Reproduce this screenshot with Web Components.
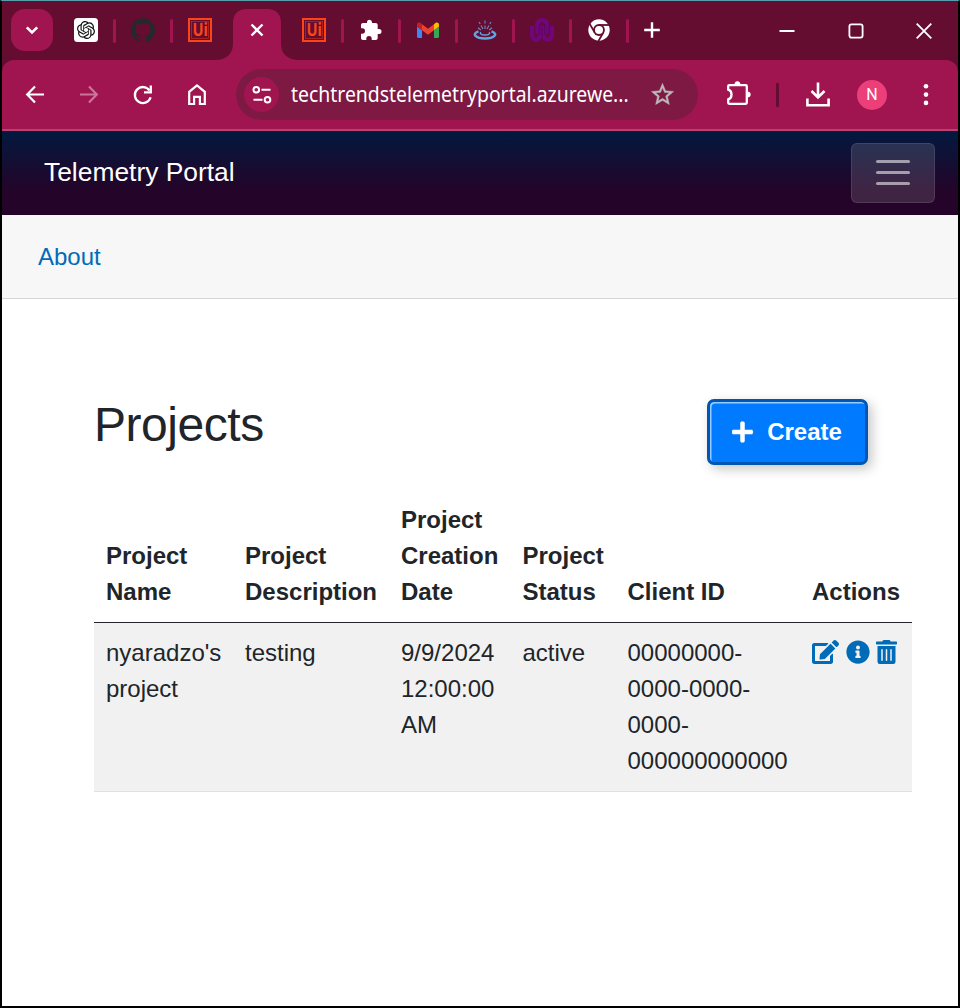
<!DOCTYPE html>
<html lang="en">
<head>
<meta charset="utf-8">
<title>Projects - Telemetry Portal</title>
<style>
html,body{margin:0;height:100%;background:#000;overflow:hidden}
body{font-family:"Liberation Sans",Arial,sans-serif}
</style>
</head>
<body>
<app-window>
  <tab-strip slot="chrome"></tab-strip>
  <nav-toolbar slot="chrome"></nav-toolbar>
  <portal-header slot="page">Telemetry Portal</portal-header>
  <portal-menu slot="page">About</portal-menu>
  <projects-view slot="page"></projects-view>
</app-window>
<script>
const define=(name,html)=>customElements.define(name,class extends HTMLElement{
  constructor(){super();this.attachShadow({mode:'open'}).innerHTML=html;}
});

// stroke attributes for line icons
const S=w=>`fill="none" stroke="currentColor" stroke-width="${w}"`;
const ICONS={
  chevron:['0 0 30 30',`<path ${S(2.6)} d="M9.8 12.3L15 17.5L20.2 12.3"/>`],
  openai:['0 0 24 24',`<rect width="24" height="24" rx="3.5" fill="#fff"/><g transform="translate(3 3) scale(.75)"><path fill="#111" d="M22.2819 9.8211a5.9847 5.9847 0 0 0-.5157-4.9108 6.0462 6.0462 0 0 0-6.5098-2.9A6.0651 6.0651 0 0 0 4.9807 4.1818a5.9847 5.9847 0 0 0-3.9977 2.9 6.0462 6.0462 0 0 0 .7427 7.0966 5.98 5.98 0 0 0 .511 4.9107 6.051 6.051 0 0 0 6.5146 2.9001A5.9847 5.9847 0 0 0 13.2599 24a6.0557 6.0557 0 0 0 5.7718-4.2058 5.9894 5.9894 0 0 0 3.9977-2.9001 6.0557 6.0557 0 0 0-.7475-7.0729zm-9.022 12.6081a4.4755 4.4755 0 0 1-2.8764-1.0408l.1419-.0804 4.7783-2.7582a.7948.7948 0 0 0 .3927-.6813v-6.7369l2.02 1.1686a.071.071 0 0 1 .038.052v5.5826a4.504 4.504 0 0 1-4.4945 4.4944zm-9.6607-4.1254a4.4708 4.4708 0 0 1-.5346-3.0137l.142.0852 4.783 2.7582a.7712.7712 0 0 0 .7806 0l5.8428-3.3685v2.3324a.0804.0804 0 0 1-.0332.0615L9.74 19.9502a4.4992 4.4992 0 0 1-6.1408-1.6464zM2.3408 7.8956a4.485 4.485 0 0 1 2.3655-1.9728V11.6a.7664.7664 0 0 0 .3879.6765l5.8144 3.3543-2.0201 1.1685a.0757.0757 0 0 1-.071 0l-4.8303-2.7865A4.504 4.504 0 0 1 2.3408 7.872zm16.5963 3.8558L13.1038 8.364 15.1192 7.2a.0757.0757 0 0 1 .071 0l4.8303 2.7913a4.4944 4.4944 0 0 1-.6765 8.1042v-5.6772a.79.79 0 0 0-.407-.667zm2.0107-3.0231l-.142-.0852-4.7735-2.7818a.7759.7759 0 0 0-.7854 0L9.409 9.2297V6.8974a.0662.0662 0 0 1 .0284-.0615l4.8303-2.7866a4.4992 4.4992 0 0 1 6.6802 4.66zM8.3065 12.863l-2.02-1.1638a.0804.0804 0 0 1-.038-.0567V6.0742a4.4992 4.4992 0 0 1 7.3757-3.4537l-.142.0805L8.704 5.459a.7948.7948 0 0 0-.3927.6813zm1.0976-2.3654l2.602-1.4998 2.6069 1.4998v2.9994l-2.5974 1.4997-2.6067-1.4997Z"/></g>`],
  github:['0 0 24 24',`<path fill="#24292e" d="M12 .297c-6.63 0-12 5.373-12 12 0 5.303 3.438 9.8 8.205 11.385.6.113.82-.258.82-.577 0-.285-.01-1.04-.015-2.04-3.338.724-4.042-1.61-4.042-1.61C4.422 18.07 3.633 17.7 3.633 17.7c-1.087-.744.084-.729.084-.729 1.205.084 1.838 1.236 1.838 1.236 1.07 1.835 2.809 1.305 3.495.998.108-.776.417-1.305.76-1.605-2.665-.3-5.466-1.332-5.466-5.93 0-1.31.465-2.38 1.235-3.22-.135-.303-.54-1.523.105-3.176 0 0 1.005-.322 3.3 1.23.96-.267 1.98-.399 3-.405 1.02.006 2.04.138 3 .405 2.28-1.552 3.285-1.23 3.285-1.23.645 1.653.24 2.873.12 3.176.765.84 1.23 1.91 1.23 3.22 0 4.61-2.805 5.625-5.475 5.92.42.36.81 1.096.81 2.22 0 1.606-.015 2.896-.015 3.286 0 .315.21.69.825.57C20.565 22.092 24 17.592 24 12.297c0-6.627-5.373-12-12-12"/>`],
  uipath:['0 0 24 24',`<rect x="1" y="1" width="22" height="22" fill="none" stroke="#fa4616" stroke-width="2"/><rect x="3.4" y="3.4" width="17.2" height="17.2" fill="none" stroke="#fa4616" stroke-width=".6" opacity=".7"/><text x="12.2" y="18.2" text-anchor="middle" textLength="15.5" lengthAdjust="spacingAndGlyphs" font-family="Noto Sans,sans-serif" font-weight="700" font-size="17.5" fill="#fa4616">Ui</text>`],
  close:['0 0 30 30',`<path ${S(2.4)} d="M9.5 9.5L20.5 20.5M20.5 9.5L9.5 20.5"/>`],
  extension:['0 0 24 24',`<path fill="#fff" d="M20 11H18.700V7c0-1.100-.9-2-2-2h-3.700V4.200a2.500 2.500 0 0 0-5 0V5H4c-1.100 0-1.990.9-1.990 2v3.300H3.300a2.700 2.700 0 0 1 0 5.400H2V20c0 1.100.9 2 2 2h3.300v-1.200a2.700 2.700 0 0 1 5.400 0V22H16.700c1.100 0 2-.9 2-2v-4h1.300a2.500 2.500 0 0 0 0-5z"/>`],
  gmail:['0 0 24 24',`<path fill="#4285f4" d="M1 8.500L6 12.200V20H2.500A1.500 1.500 0 0 1 1 18.500z"/><path fill="#34a853" d="M18 12.200L23 8.500V18.500A1.500 1.500 0 0 1 21.500 20H18z"/><path fill="#fbbc04" d="M18 6.200L19.400 5C21 3.900 23 4.900 23 6.800V8.500L18 12.300z"/><path fill="#c5221f" d="M6 6.200L4.600 5C3 3.900 1 4.900 1 6.800V8.500L6 12.300z"/><path fill="#ea4335" d="M6 6.200L12 10.700L18 6.200V12.300L12 16.800L6 12.300z"/>`],
  bowl:['0 0 24 24',`<g fill="none" stroke="#63a4df"><path stroke-width="1.100" opacity=".85" d="M12 11V7.500M12 5.500V2.500M10 11L8 7.500M7.200 6L6 4M14 11L16 7.500M16.800 6L18 4M7.800 12L5 9.700M16.200 12L19 9.700"/><path stroke-width="1.300" d="M7.600 14C6.500 16.200 9 17 12 17S17.500 16.200 16.400 14"/><path stroke-width="2.400" d="M5.500 13.300C-2 16 3 20.500 12 20.500S26 16 18.500 13.300"/></g>`],
  links:['0 0 24 24',`<g fill="none" stroke="#70067a" stroke-width="4.400"><path d="M2.200 8V16.500Q2.200 21.500 6 21.500T10 17V8"/><path d="M7.200 16V7Q7.200 2.300 12 2.300T16.800 7V16"/><path d="M14 8V17Q14 21.500 18 21.500T21.800 16.500V8"/></g><path fill="none" stroke="#520a52" stroke-width=".7" d="M9.400 7V17M14.600 6V17M12 9V18M4.800 8V16M19.200 8V16"/>`],
  chromium:['0 0 24 24',`<circle cx="12" cy="12" r="10.700" fill="#fff"/><circle cx="12" cy="12" r="5.900" fill="#650d31"/><g stroke="#650d31" stroke-width="1.800" fill="none"><path d="M12 7H22.500"/><path d="M12 7H22.500" transform="rotate(120 12 12)"/><path d="M12 7H22.500" transform="rotate(240 12 12)"/></g><circle cx="12" cy="12" r="4" fill="#fff"/>`],
  add:['0 0 30 30',`<path ${S(2.4)} d="M15 7.200V22.800M7.200 15H22.800"/>`],
  minimize:['0 0 30 30',`<path ${S(2)} d="M7.500 16H22.500"/>`],
  maximize:['0 0 30 30',`<rect x="8.400" y="9.400" width="13.200" height="13.200" rx="2" ${S(1.8)}/>`],
  quit:['0 0 30 30',`<path ${S(1.8)} d="M7.700 8.700L22.300 23.300M22.300 8.700L7.700 23.300"/>`],
  back:['0 0 30 30',`<path ${S(2.2)} d="M24 14.500H7.500M15 6.500L7.200 14.500L15 22.500"/>`],
  forward:['0 0 30 30',`<path ${S(2.2)} d="M6 14.500H22.500M15 6.500L22.800 14.500L15 22.500"/>`],
  reload:['0 0 30 30',`<path ${S(2.3)} d="M21.500 10.500A8 8 0 1 0 22.600 17.200"/><path ${S(2.3)} d="M22.800 5.500V12.300H16"/>`],
  home:['0 0 30 30',`<path ${S(2.2)} d="M7.200 24V11.800L15 5.500L22.800 11.800V24H17.900V16.800H12.100V24Z"/>`],
  tune:['0 0 30 30',`<g ${S(2)}><circle cx="9.300" cy="9.700" r="2.800"/><path d="M14.500 9.700H23.500M6.500 19.700H15.500"/><circle cx="20.500" cy="19.700" r="2.800"/></g>`],
  star:['0 0 24 24',`<path fill="currentColor" stroke="currentColor" stroke-width=".3" d="M22 9.240l-7.190-.62L12 2 9.190 8.630 2 9.240l5.460 4.730L5.820 21 12 17.270 18.180 21l-1.630-7.030L22 9.240zM12 15.400l-3.760 2.270 1-4.280-3.320-2.880 4.380-.38L12 6.100l1.710 4.040 4.380.38-3.320 2.880 1 4.280L12 15.400z"/>`],
  puzzle:['0 0 30 30',`<path ${S(2.3)} d="M6.200 5.200H22.800Q23.800 5.200 23.800 6.200V22.800Q23.800 23.800 22.800 23.800H6.200Q5.200 23.800 5.200 22.800V19.300C9.600 18.200 9.600 10.800 5.200 9.700V6.200Q5.200 5.200 6.200 5.200Z"/><path fill="currentColor" d="M11.400 5A3 3.700 0 0 1 17.400 5ZM24 11.500A3.700 3 0 0 1 24 17.500Z"/>`],
  download:['0 0 30 30',`<path ${S(2.6)} d="M15 2.500V17M8.500 11L15 17.500L21.500 11M4.400 18.500V25.300H25.600V18.500"/>`],
  more:['0 0 30 30',`<g fill="currentColor"><circle cx="15" cy="6.300" r="2.300"/><circle cx="15" cy="14.600" r="2.300"/><circle cx="15" cy="22.900" r="2.300"/></g>`],
  plus:['0 0 448 512',`<path fill="currentColor" d="M416 208H272V64c0-17.670-14.330-32-32-32h-32c-17.670 0-32 14.330-32 32v144H32c-17.670 0-32 14.330-32 32v32c0 17.670 14.330 32 32 32h144v144c0 17.670 14.330 32 32 32h32c17.670 0 32-14.330 32-32V304h144c17.670 0 32-14.330 32-32v-32c0-17.670-14.330-32-32-32z"/>`],
  edit:['0 0 576 512',`<path fill="currentColor" d="M402.6 83.2l90.2 90.2c3.8 3.8 3.8 10 0 13.8L274.4 405.6l-92.8 10.3c-12.4 1.4-22.9-9.1-21.5-21.5l10.3-92.8L388.8 83.2c3.8-3.8 10-3.8 13.8 0zm162-22.900l-48.800-48.800c-15.200-15.200-39.900-15.200-55.200 0l-35.400 35.400c-3.800 3.800-3.800 10 0 13.800l90.200 90.200c3.800 3.800 10 3.800 13.800 0l35.400-35.400c15.200-15.300 15.200-40 0-55.200zM384 346.200V448H64V128h229.800c3.200 0 6.200-1.300 8.500-3.500l40-40c7.600-7.600 2.200-20.500-8.500-20.500H48C21.500 64 0 85.500 0 112v352c0 26.500 21.500 48 48 48h352c26.500 0 48-21.500 48-48V306.200c0-10.700-12.900-16-20.500-8.500l-40 40c-2.200 2.300-3.500 5.300-3.500 8.500z"/>`],
  info:['0 0 512 512',`<path fill="currentColor" d="M256 8C119.043 8 8 119.083 8 256c0 136.997 111.043 248 248 248s248-111.003 248-248C504 119.083 392.957 8 256 8zm0 110c23.196 0 42 18.804 42 42s-18.804 42-42 42-42-18.804-42-42 18.804-42 42-42zm56 254c0 6.627-5.373 12-12 12h-88c-6.627 0-12-5.373-12-12v-24c0-6.627 5.373-12 12-12h12v-64h-12c-6.627 0-12-5.373-12-12v-24c0-6.627 5.373-12 12-12h64c6.627 0 12 5.373 12 12v100h12c6.627 0 12 5.373 12 12v24z"/>`],
  trash:['0 0 448 512',`<path fill="currentColor" d="M32 464a48 48 0 0 0 48 48h288a48 48 0 0 0 48-48V128H32zm272-256a16 16 0 0 1 32 0v224a16 16 0 0 1-32 0zm-96 0a16 16 0 0 1 32 0v224a16 16 0 0 1-32 0zm-96 0a16 16 0 0 1 32 0v224a16 16 0 0 1-32 0zM432 32H312l-9.400-18.700A24 24 0 0 0 281.100 0H166.800a23.720 23.720 0 0 0-21.400 13.300L136 32H16A16 16 0 0 0 0 48v32a16 16 0 0 0 16 16h416a16 16 0 0 0 16-16V48a16 16 0 0 0-16-16z"/>`]
};
customElements.define('ui-icon',class extends HTMLElement{
  connectedCallback(){
    if(this.shadowRoot)return;
    const [box,body]=ICONS[this.getAttribute('name')];
    this.attachShadow({mode:'open'}).innerHTML=`<style>:host{display:inline-block;flex:none;width:var(--w,30px);height:var(--h,30px)}svg{display:block;width:100%;height:100%}</style><svg viewBox="${box}" aria-hidden="true">${body}</svg>`;
  }
});

define('app-window',`<style>
:host{display:flex;flex-direction:column;box-sizing:border-box;width:960px;height:1008px;border:2px solid #000;border-top:1px solid #579eae;background:#fff}
.chrome{background:#650d31}
.page{flex:1;background:#fff}
</style><div class="chrome"><slot name="chrome"></slot></div><div class="page"><slot name="page"></slot></div>`);

define('browser-tab',`<style>
:host{display:flex;position:relative;width:57px;height:58px;align-items:center;flex:none}
.fav{flex:1;display:flex;justify-content:center;position:relative;color:#fff}
.sep{width:3px;height:24px;border-radius:1.5px;background:#a0154f;margin-top:2px}
:host([plain]) .sep,:host([active]) .sep{visibility:hidden}
.shape{display:none}
:host([active]) .shape{display:block;position:absolute;left:-15px;bottom:-1px;width:84px;height:51px}
</style><svg class="shape" viewBox="0 0 84 51"><path fill="#a0154f" d="M0 51C11 51 18 45 18 35V14C18 5 23 0 32 0H52C61 0 66 5 66 14V35C66 45 73 51 84 51Z"/></svg>
<div class="fav"><slot></slot></div><div class="sep"></div>`);

define('tab-strip',`<style>
:host{display:flex;box-sizing:border-box;height:59px;padding-bottom:1px;align-items:center;color:#fff}
.search{width:42px;height:42px;margin:0 6px 0 9px;border-radius:14px;background:#a0154f;display:flex;align-items:center;justify-content:center}
browser-tab ui-icon{--w:24px;--h:24px}
browser-tab[active] ui-icon{--w:30px;--h:30px}
.win{margin-left:auto;display:flex;gap:38.300px;margin-right:19px}
</style>
<div class="search"><ui-icon name="chevron"></ui-icon></div>
<browser-tab><ui-icon name="openai"></ui-icon></browser-tab>
<browser-tab><ui-icon name="github"></ui-icon></browser-tab>
<browser-tab plain><ui-icon name="uipath"></ui-icon></browser-tab>
<browser-tab active><ui-icon name="close"></ui-icon></browser-tab>
<browser-tab><ui-icon name="uipath"></ui-icon></browser-tab>
<browser-tab><ui-icon name="extension"></ui-icon></browser-tab>
<browser-tab><ui-icon name="gmail"></ui-icon></browser-tab>
<browser-tab><ui-icon name="bowl"></ui-icon></browser-tab>
<browser-tab><ui-icon name="links"></ui-icon></browser-tab>
<browser-tab><ui-icon name="chromium"></ui-icon></browser-tab>
<ui-icon name="add" style="margin-left:8px"></ui-icon>
<div class="win"><ui-icon name="minimize"></ui-icon><ui-icon name="maximize"></ui-icon><ui-icon name="quit"></ui-icon></div>`);

define('nav-toolbar',`<style>
:host{display:flex;box-sizing:border-box;height:71px;align-items:center;background:linear-gradient(#bd4170,#bd4170) 0 100%/100% 2px no-repeat #a0154f;padding-bottom:2px;border-radius:12px 12px 0 0;color:#fff;padding-left:18px;font-family:"Noto Sans","Open Sans",sans-serif}
.nav{display:flex;gap:24px}
.off{opacity:.42}
.omni{display:flex;align-items:center;box-sizing:border-box;width:462px;height:51px;border-radius:26px;background:#7d1943;margin-left:24px;padding:0 22px 0 8px}
.site{display:flex;flex:none;align-items:center;justify-content:center;width:35px;height:35px;border-radius:50%;background:#a0154f;margin-right:12px}
.url{flex:1;width:0;white-space:nowrap;font-size:21px;line-height:30px;padding-bottom:2px}
.url span{display:inline-block;transform-origin:0 50%;transform:scaleX(.924)}
.sep{width:3px;height:24px;background:#650d31;border-radius:1px;margin:0 24px 0 23px}
.avatar{display:flex;align-items:center;justify-content:center;width:30px;height:30px;border-radius:50%;background:#ec3f7a;margin:0 24px;font:16px Roboto,sans-serif}
</style>
<div class="nav"><ui-icon name="back"></ui-icon><ui-icon class="off" name="forward"></ui-icon><ui-icon name="reload"></ui-icon><ui-icon name="home"></ui-icon></div>
<div class="omni"><div class="site"><ui-icon name="tune"></ui-icon></div><div class="url"><span>techtrendstelemetryportal.azurewe...</span></div><ui-icon name="star" style="--w:27px;--h:27px;color:#bcb9bc;"></ui-icon></div>
<ui-icon name="puzzle" style="margin-left:25px"></ui-icon><div class="sep"></div>
<ui-icon name="download"></ui-icon><div class="avatar">N</div><ui-icon name="more"></ui-icon>`);

define('portal-header',`<style>
:host{display:flex;box-sizing:border-box;height:84px;align-items:center;justify-content:space-between;padding:0 23px 0 42px;background:linear-gradient(180deg,#02193f 0%,#240429 70%);color:#fff;font-size:26.400px}
.brand{padding-bottom:1px}
button{display:flex;flex-direction:column;justify-content:center;align-items:center;gap:8px;width:84px;height:60px;box-sizing:border-box;padding:0 0 1px;border:1px solid rgba(255,255,255,.1);border-radius:6px;background:rgba(255,255,255,.13)}
i{width:34px;height:3px;border-radius:1.500px;background:rgba(255,255,255,.55)}
</style><div class="brand"><slot></slot></div><button aria-label="Toggle navigation"><i></i><i></i><i></i></button>`);

define('portal-menu',`<style>
:host{display:flex;box-sizing:border-box;height:84px;align-items:center;padding-left:36px;background:#f7f7f7;border-bottom:1px solid #d6d5d5;color:#006bb7;font-size:24px;line-height:36px}
</style><slot></slot>`);

define('create-button',`<style>
:host{display:flex;box-sizing:border-box;width:161px;height:66px;align-items:center;justify-content:center;gap:14px;padding-right:1px;border:3px solid #0056b3;border-radius:7px;background:#007bff;color:#fff;font-weight:700;font-size:24px;box-shadow:4px 4px 12px rgba(0,0,0,.22),inset 1.500px 1.500px 0 rgba(255,255,255,.6)}
ui-icon{--w:21px;--h:24px;margin-top:-1px}
</style><ui-icon name="plus"></ui-icon><slot></slot>`);

define('projects-table',`<style>
:host{display:block;width:818px}
table{border-collapse:collapse;table-layout:fixed;width:818px;font-size:24px;line-height:36px;color:#212529}
th,td{padding:12px;text-align:left;white-space:nowrap}
th{vertical-align:bottom;border-bottom:1px solid #212529;font-weight:700}
td{vertical-align:top;background:#f1f1f1;border-bottom:1px solid #dee2e6}
.actions{display:flex;gap:7px;color:#006bb7;padding-top:5px;height:24px}
</style><table>
<colgroup><col style="width:139px"><col style="width:156px"><col style="width:121.500px"><col style="width:105px"><col style="width:184.500px"><col style="width:112px"></colgroup>
<thead><tr><th>Project<br>Name</th><th>Project<br>Description</th><th>Project<br>Creation<br>Date</th><th>Project<br>Status</th><th>Client ID</th><th>Actions</th></tr></thead>
<tbody><tr><td>nyaradzo's<br>project</td><td>testing</td><td>9/9/2024<br>12:00:00<br>AM</td><td>active</td><td>00000000-<br>0000-0000-<br>0000-<br>000000000000</td>
<td><div class="actions"><ui-icon name="edit" style="--w:27px;--h:24px"></ui-icon><ui-icon name="info" style="--w:24px;--h:24px"></ui-icon><ui-icon name="trash" style="--w:21px;--h:24px;margin-left:-1px"></ui-icon></div></td></tr></tbody></table>`);

define('projects-view',`<style>
:host{display:block;padding:100px 0 0 92px;color:#212529}
.head{display:flex;justify-content:space-between;align-items:flex-start;width:774px;height:91px}
h1{margin:-3px 0 0;font-weight:400;font-size:48px;line-height:58px;letter-spacing:-.45px}
</style><div class="head"><h1>Projects</h1><create-button>Create</create-button></div><projects-table></projects-table>`);
</script>
</body>
</html>
